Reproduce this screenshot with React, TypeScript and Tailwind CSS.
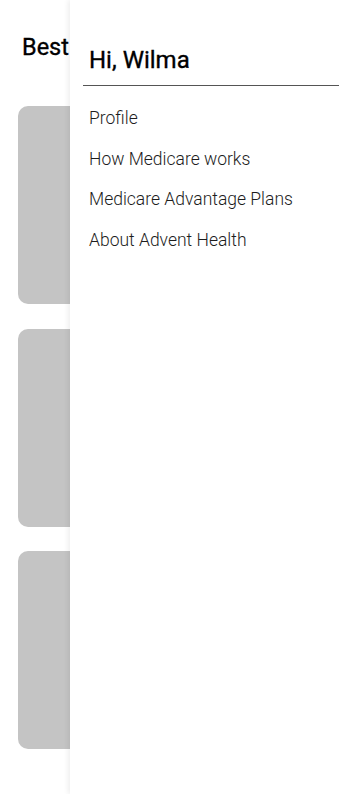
const menuItems = [
  "Profile",
  "How Medicare works",
  "Medicare Advantage Plans",
  "About Advent Health",
];

const Drawer = () => {
  return (
    <aside className="absolute top-0 bottom-0 left-[70px] right-0 bg-white shadow-[-2px_0_5px_rgba(0,0,0,0.07)] pl-[13px] pr-[19px]">
      <h2 className="mt-[44px] pl-[6px] text-[24px] leading-[32px] font-normal text-black [-webkit-text-stroke:0.35px_#000]">
        Hi, Wilma
      </h2>
      <div className="mt-[9px] h-px bg-[#555]" />
      <nav className="mt-[20px] pl-[6px] flex flex-col gap-[16.5px]">
        {menuItems.map((item) => (
          <a
            key={item}
            href="#"
            className="text-[17.5px] leading-[24px] font-light text-[#1d1d1d]"
          >
            {item}
          </a>
        ))}
      </nav>
    </aside>
  );
};

const App = () => {
  return (
    <div
      className="relative w-[358px] h-[794px] overflow-hidden bg-white"
      style={{ fontFamily: "Roboto, 'Noto Sans', sans-serif" }}
    >
      <main className="px-[18px]">
        <h1 className="pt-[33px] pl-[4px] text-[23.5px] leading-[28px] font-normal text-black whitespace-nowrap [-webkit-text-stroke:0.35px_#000]">
          Best
        </h1>
        <div className="mt-[45px] flex flex-col gap-[24.5px]">
          {[0, 1, 2].map((i) => (
            <div key={i} className="h-[198px] rounded-[10px] bg-[#c4c4c4]" />
          ))}
        </div>
      </main>
      <Drawer />
    </div>
  );
};

export default App;
